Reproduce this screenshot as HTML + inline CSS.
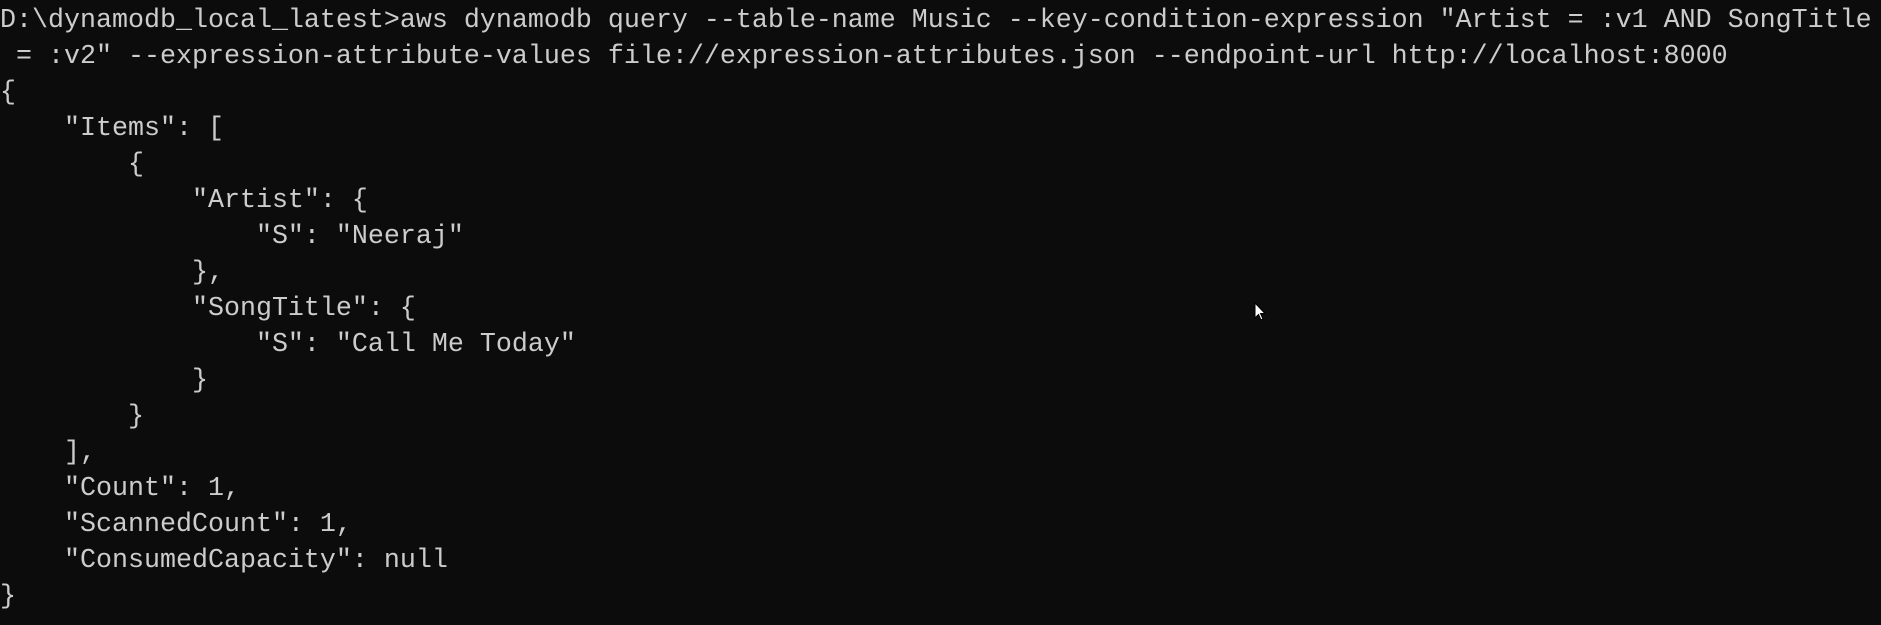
<!DOCTYPE html>
<html><head><meta charset="utf-8"><style>
html,body{margin:0;padding:0;background:#0c0c0c;width:1881px;height:625px;overflow:hidden}
pre{margin:0;padding:3px 0 0 0;color:#cccccc;font-family:"Liberation Mono",monospace;font-size:26.67px;line-height:36px;white-space:pre}
.c{position:absolute;left:1254px;top:302px}
</style></head><body>
<pre>D:\dynamodb_local_latest&gt;aws dynamodb query --table-name Music --key-condition-expression "Artist = :v1 AND SongTitle
 = :v2" --expression-attribute-values file://expression-attributes.json --endpoint-url http://localhost:8000
{
    "Items": [
        {
            "Artist": {
                "S": "Neeraj"
            },
            "SongTitle": {
                "S": "Call Me Today"
            }
        }
    ],
    "Count": 1,
    "ScannedCount": 1,
    "ConsumedCapacity": null
}</pre>
<svg class="c" width="14" height="20" viewBox="0 0 14 20"><path d="M1 1 L1 16 L4.5 12.5 L7 18 L9 17 L6.5 11.5 L11 11.5 Z" fill="#fff" stroke="#000" stroke-width="1"/></svg>
</body></html>
